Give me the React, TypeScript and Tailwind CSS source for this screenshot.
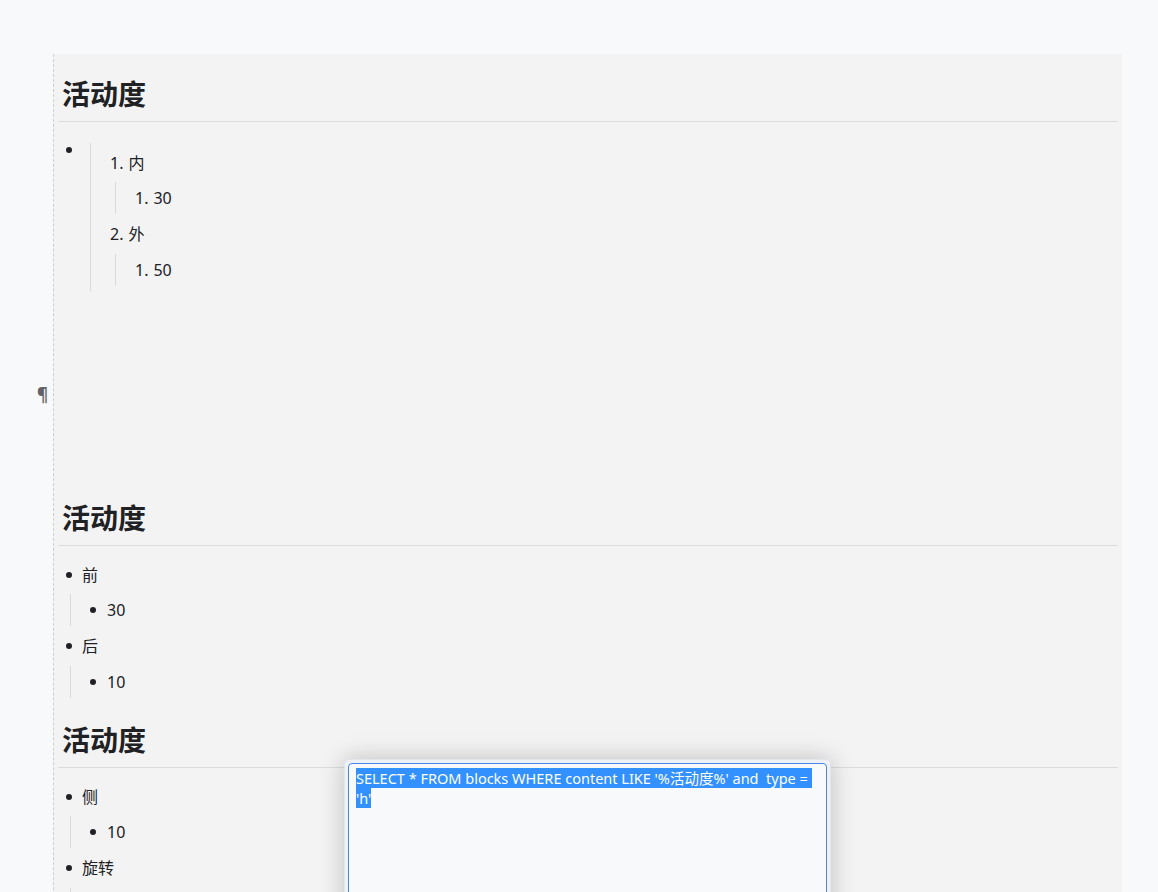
import React from 'react';

const font = { fontFamily: '"Noto Sans", "Noto Sans CJK SC", sans-serif' };

const Bullet = ({ top = 'mt-0' }: { top?: string }) => (
  <span className={`block w-[6px] h-[6px] rounded-full bg-[#202124] ${top}`} />
);

const Heading = ({ text }: { text: string }) => (
  <div className="mx-1 pt-[15px] pb-[6px] border-b border-[#dcdcdc]">
    <div className="pl-1 h-[42px] leading-[42px] text-[28px] font-bold text-[#202124]">{text}</div>
  </div>
);

// top level bullet item with a nested single bullet child
const BulletGroup = ({ items }: { items: { label: string; child: string }[] }) => (
  <div className="mx-1 pt-[10px]">
    {items.map((it, i) => (
      <div key={i}>
        <div className={`flex items-center ${i === 0 ? 'h-[38px]' : 'h-[40px]'}`}>
          <div className="w-6 pl-2">
            <Bullet />
          </div>
          <span className="text-[16px] text-[#202124]">{it.label}</span>
        </div>
        <div className="ml-3 border-l border-[#dadada] h-[32px] flex items-center">
          <div className="w-[25px] pl-2 ml-[11px]">
            <Bullet />
          </div>
          <span className="text-[16px] text-[#202124]">{it.child}</span>
        </div>
      </div>
    ))}
  </div>
);

const OlRow = ({ n, text, h }: { n: string; text: string; h: string }) => (
  <div className={`flex items-center pl-[19px] ${h} text-[16px] text-[#202124]`}>
    <span>{n}.</span>
    <span className="ml-[5px]">{text}</span>
  </div>
);

export default function App() {
  return (
    <div className="relative min-h-screen bg-[#f8f9fb] pt-[54px] pl-[53px] pr-[36px] overflow-hidden" style={font}>
      <div className="border-l border-dashed border-[#cfcfcf] bg-[#f3f3f3] pt-1 pb-10">
        <Heading text="活动度" />

        {/* list with nested ordered list */}
        <div className="mx-1 mt-[21px] flex">
          <div className="w-8 pl-2 pt-1">
            <Bullet />
          </div>
          <div className="border-l border-[#dadada] pb-[5px] flex-1">
            <OlRow n="1" text="内" h="h-[39px]" />
            <div className="ml-6 border-l border-[#dadada]">
              <OlRow n="1" text="30" h="h-[32px]" />
            </div>
            <OlRow n="2" text="外" h="h-[40px]" />
            <div className="ml-6 border-l border-[#dadada]">
              <OlRow n="1" text="50" h="h-[32px]" />
            </div>
          </div>
        </div>

        {/* empty paragraph */}
        <div className="relative h-[191px]">
          <span className="absolute left-[-17px] top-[95px] text-[17px] font-bold text-[#5f6368] leading-none">¶</span>
        </div>

        <Heading text="活动度" />
        <BulletGroup
          items={[
            { label: '前', child: '30' },
            { label: '后', child: '10' },
          ]}
        />
        <div className="h-[6px]" />
        <Heading text="活动度" />
        <BulletGroup
          items={[
            { label: '侧', child: '10' },
            { label: '旋转', child: '10' },
          ]}
        />
      </div>

      {/* query editor popup */}
      <div className="absolute left-[344px] top-[759px] w-[487px] h-[220px] rounded-[5px] bg-[#eef1f6] border border-[#e1e5ec] shadow-[0_0_24px_rgba(0,0,0,0.22)] p-[3px]">
        <div className="h-full rounded-[4px] border border-[#4a86e8] bg-[#f8f9fb] px-[7px] pt-[4px] text-[14.5px] leading-[20px] text-white">
          <span className="bg-[#3390ff] whitespace-pre">{"SELECT * FROM blocks WHERE content LIKE '%活动度%' and  type = "}</span>
          <br />
          <span className="bg-[#3390ff]">'h'</span>
        </div>
      </div>
    </div>
  );
}
